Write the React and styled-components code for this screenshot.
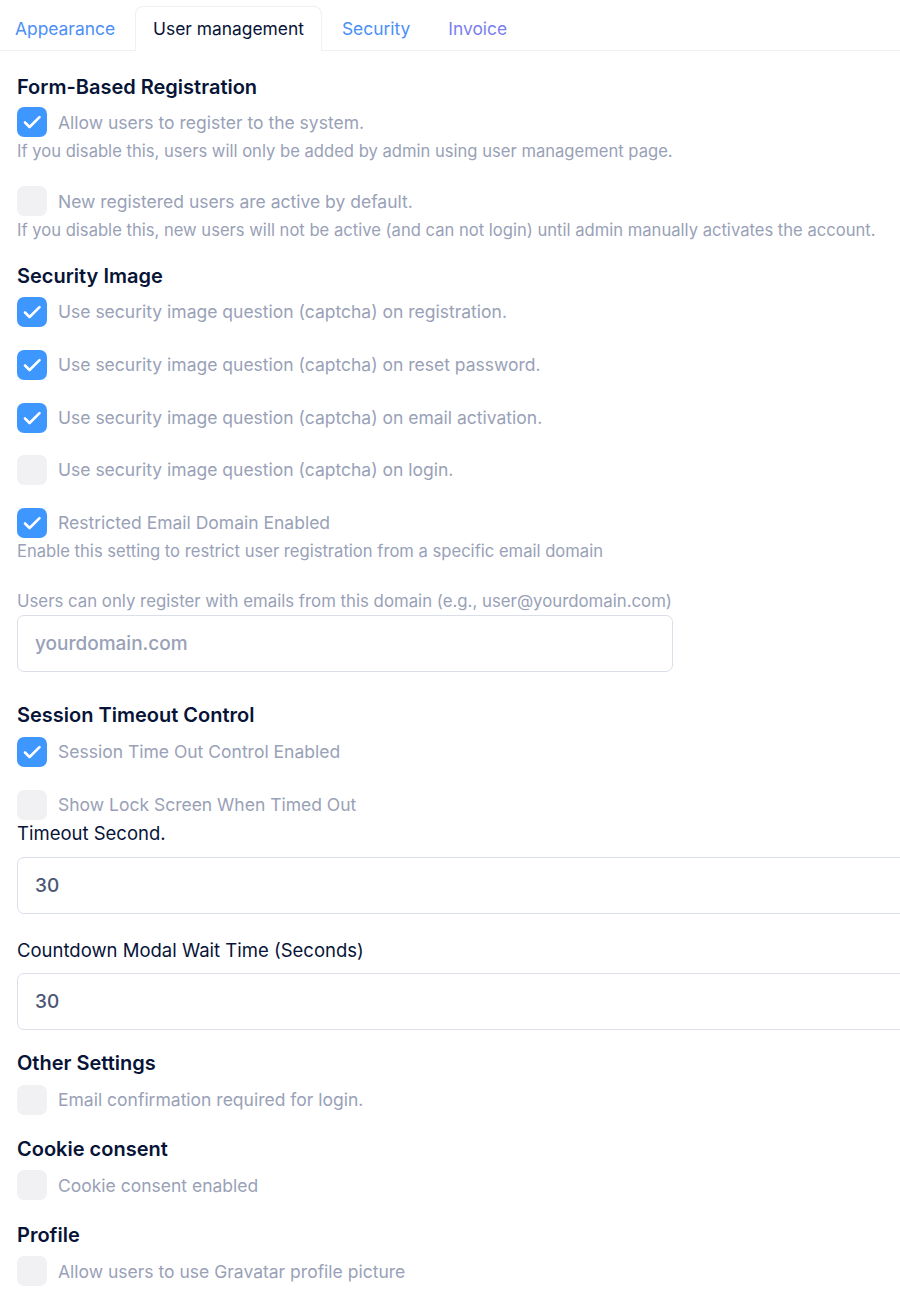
import React from "react";
import styled, { createGlobalStyle } from "styled-components";

const Global = createGlobalStyle`
  html, body { margin: 0; padding: 0; background: #fff; overflow-x: hidden; }
  body { font-family: Inter, "Noto Sans", Arial, sans-serif; }
  * { box-sizing: border-box; }
`;

const Page = styled.div`
  width: 900px;
  overflow: hidden;
  padding-bottom: 24px;
`;

const TabBar = styled.div`
  display: flex;
  gap: 2px;
  margin-left: -3px;
  padding-top: 6px;
  border-bottom: 1px solid #f1f1f4;
`;

const Tab = styled.div`
  height: 45px;
  display: flex;
  align-items: center;
  padding: 0 17px 1px;
  font-size: 17.4px;
  color: ${(p) => (p.$active ? "#071437" : p.$color)};
  border: 1px solid ${(p) => (p.$active ? "#eff0f3" : "transparent")};
  border-bottom: none;
  border-radius: 8px 8px 0 0;
  background: ${(p) => (p.$active ? "#fff" : "transparent")};
  margin-bottom: -1px;
`;

const Content = styled.div`
  padding-left: 17px;
  display: flex;
  flex-direction: column;
`;

const SectionTitle = styled.div`
  font-size: 20px;
  line-height: 27px;
  font-weight: 600;
  color: #071437;
  margin-top: ${(p) => p.$mt}px;
  margin-bottom: ${(p) => p.$mb ?? 7.5}px;
`;

const CheckRow = styled.label`
  display: flex;
  align-items: center;
  gap: 11px;
  margin-top: ${(p) => p.$mt || 0}px;
`;

const Box = styled.span`
  width: 30px;
  height: 30px;
  flex: none;
  border-radius: 7px;
  background: ${(p) => (p.$on ? "#3e97ff" : "#f1f1f4")};
  display: flex;
  align-items: center;
  justify-content: center;
`;

const CheckLabel = styled.span`
  font-size: 17.5px;
  color: #99a1b7;
`;

const Help = styled.div`
  font-size: 16.6px;
  line-height: 22px;
  color: #99a1b7;
  margin-top: ${(p) => p.$mt || 2.5}px;
`;

const FieldLabel = styled.div`
  font-size: ${(p) => (p.$dark ? 18.5 : 16.8)}px;
  line-height: 22px;
  color: ${(p) => (p.$dark ? "#071437" : "#99a1b7")};
  margin-top: ${(p) => p.$mt}px;
  margin-bottom: ${(p) => p.$mb}px;
`;

const Input = styled.input`
  height: 57px;
  width: ${(p) => p.$w};
  border: 1px solid #dbdfe9;
  border-radius: 7px;
  padding: 0 17px;
  font-family: Inter, sans-serif;
  font-size: 19px;
  font-weight: 500;
  color: #4b5675;
  background: #fff;
  outline: none;
  &::placeholder { color: #99a1b7; }
`;

const Check = () => (
  <svg width="30" height="30" viewBox="0 0 30 30" fill="none">
    <path d="M8 15.5 L12.6 20 L22.5 10.2" stroke="#fff" strokeWidth="2.6" strokeLinecap="round" strokeLinejoin="round" />
  </svg>
);

const Checkbox = ({ on, children, mt }) => (
  <CheckRow $mt={mt}>
    <Box $on={on}>{on && <Check />}</Box>
    <CheckLabel>{children}</CheckLabel>
  </CheckRow>
);

export default function App() {
  return (
    <Page>
      <Global />
      <TabBar>
        <Tab $color="#4b8ff7">Appearance</Tab>
        <Tab $active>User management</Tab>
        <Tab $color="#4b8ff7">Security</Tab>
        <Tab $color="#7b7ff0">Invoice</Tab>
      </TabBar>
      <Content>
        <SectionTitle $mt={23} $mb={6}>Form-Based Registration</SectionTitle>
        <Checkbox on>Allow users to register to the system.</Checkbox>
        <Help $mt={3}>If you disable this, users will only be added by admin using user management page.</Help>
        <Checkbox mt={24}>New registered users are active by default.</Checkbox>
        <Help>If you disable this, new users will not be active (and can not login) until admin manually activates the account.</Help>

        <SectionTitle $mt={22.5} $mb={6.5}>Security Image</SectionTitle>
        <Checkbox on>Use security image question (captcha) on registration.</Checkbox>
        <Checkbox on mt={23}>Use security image question (captcha) on reset password.</Checkbox>
        <Checkbox on mt={23}>Use security image question (captcha) on email activation.</Checkbox>
        <Checkbox mt={22}>Use security image question (captcha) on login.</Checkbox>
        <Checkbox on mt={23}>Restricted Email Domain Enabled</Checkbox>
        <Help>Enable this setting to restrict user registration from a specific email domain</Help>
        <FieldLabel $mt={28} $mb={3}>Users can only register with emails from this domain (e.g., user@yourdomain.com)</FieldLabel>
        <Input $w="656px" placeholder="yourdomain.com" />

        <SectionTitle $mt={30}>Session Timeout Control</SectionTitle>
        <Checkbox on>Session Time Out Control Enabled</Checkbox>
        <Checkbox mt={23}>Show Lock Screen When Timed Out</Checkbox>
        <FieldLabel $dark $mt={2} $mb={13}>Timeout Second.</FieldLabel>
        <Input $w="920px" defaultValue="30" />
        <FieldLabel $dark $mt={25} $mb={12}>Countdown Modal Wait Time (Seconds)</FieldLabel>
        <Input $w="920px" defaultValue="30" />

        <SectionTitle $mt={20.5}>Other Settings</SectionTitle>
        <Checkbox>Email confirmation required for login.</Checkbox>
        <SectionTitle $mt={21.5} $mb={7}>Cookie consent</SectionTitle>
        <Checkbox>Cookie consent enabled</Checkbox>
        <SectionTitle $mt={22} $mb={7}>Profile</SectionTitle>
        <Checkbox>Allow users to use Gravatar profile picture</Checkbox>
      </Content>
    </Page>
  );
}
